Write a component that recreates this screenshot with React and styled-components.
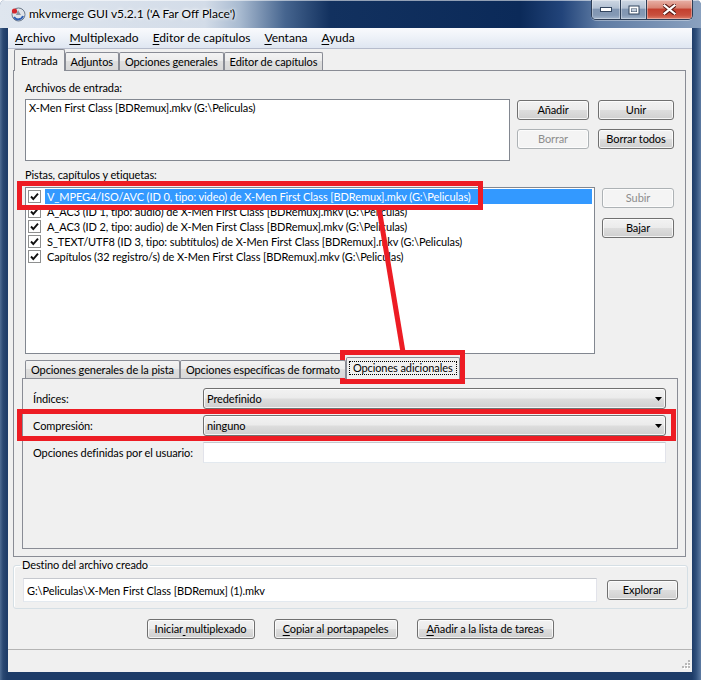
import React from "react";
import styled, { createGlobalStyle } from "styled-components";

const FONT = `Lato, "Noto Sans", "Liberation Sans", sans-serif`;
const PANE = "#f0f0f0";

const GlobalStyle = createGlobalStyle`
  *, *::before, *::after { box-sizing: border-box; }
  html, body { margin: 0; padding: 0; background: #ffffff; }
  body { font-family: ${FONT}; font-size: 11px; color: #000; }
`;

const Frame = styled.div`
  position: relative;
  width: 701px;
  height: 680px;
  display: flex;
  flex-direction: column;
  overflow: hidden;
  font-family: ${FONT};
  font-size: 11px;
  letter-spacing: -0.1px;
  border-radius: 5px 5px 0 0;
  background: linear-gradient(
    90deg,
    #4f6c93 0px,
    #2a4872 3px,
    #1e3c68 7px,
    #1e3c68 calc(100% - 9px),
    #2f4f7b calc(100% - 5px),
    #5e7ba2 100%
  );
`;

const TitleBar = styled.div`
  height: 28px;
  flex: none;
  display: flex;
  align-items: flex-start;
  padding-left: 10px;
  letter-spacing: 0;
  background: linear-gradient(
    90deg,
    #dfe6ef 0px,
    #d3dce8 205px,
    #a8bad0 240px,
    #46658f 285px,
    #12315f 330px,
    #0b2a59 520px,
    #22447a 562px,
    #5f7ca4 600px,
    #8aa1bf 701px
  );
  box-shadow: inset 0 1px 0 rgba(255, 255, 255, 0.55);
`;

const AppIcon = styled.svg`
  flex: none;
  margin-top: 6px;
`;

const Title = styled.div`
  margin-left: 3px;
  line-height: 28px;
  font-size: 12px;
  color: #000;
  white-space: nowrap;
  text-shadow: 0 0 5px #fff, 0 0 3px #fff;
`;

const Caption = styled.div`
  margin-left: auto;
  margin-right: 8px;
  height: 20px;
  display: flex;
  border: 1px solid #2c3d55;
  border-top: none;
  border-radius: 0 0 5px 5px;
  overflow: hidden;
  box-shadow: 0 1px 0 rgba(255, 255, 255, 0.35);
`;

const CapBtn = styled.div`
  width: ${(p) => p.$w}px;
  height: 100%;
  display: flex;
  align-items: center;
  justify-content: center;
  border-left: ${(p) => (p.$first ? "none" : "1px solid #2c3d55")};
  box-shadow: inset 0 0 0 1px rgba(255, 255, 255, 0.35);
  background: ${(p) =>
    p.$close
      ? "linear-gradient(#e8b0a6 0%, #d98676 40%, #c4402f 50%, #c9503e 80%, #de7d69 100%)"
      : "linear-gradient(#cdd7e3 0%, #b3c1d3 42%, #8196b2 50%, #8499b4 80%, #a4b6cc 100%)"};
`;

const Client = styled.div`
  margin: 0 9px 0 8px;
  height: 644px;
  flex: none;
  display: flex;
  flex-direction: column;
  background: #f0f0f0;
`;

const MenuBar = styled.div`
  height: 21px;
  flex: none;
  display: flex;
  align-items: center;
  border-bottom: 1px solid #b6bccc;
  background: linear-gradient(#f9fafd 0%, #eef2f8 45%, #dfe6f1 100%);
  font-size: 12px;
  letter-spacing: 0;
`;

const MenuItem = styled.div`
  padding: 0 7px;
  line-height: 20px;
  white-space: nowrap;
`;

const Key = styled.span`
  text-decoration: underline;
  text-underline-offset: 2px;
`;

const TabStrip = styled.div`
  height: 22px;
  flex: none;
  display: flex;
  align-items: flex-end;
  margin: ${(p) => p.$margin};
  padding-left: ${(p) => p.$pad}px;
  margin-bottom: -1px;
  position: relative;
  z-index: 1;
`;

const Tab = styled.div`
  height: ${(p) => (p.$active ? 22 : 18)}px;
  margin-bottom: ${(p) => (p.$active ? 0 : 1)}px;
  padding: 0 ${(p) => p.$px ?? (p.$active ? 6 : 5)}px ${(p) => (p.$active ? 1 : 0)}px;
  display: flex;
  align-items: center;
  white-space: nowrap;
  border: 1px solid #898c95;
  border-bottom: none;
  border-radius: 2px 2px 0 0;
  background: ${(p) =>
    p.$active
      ? PANE
      : "linear-gradient(#f3f3f3 0%, #ececec 45%, #dedede 50%, #d8d8d8 100%)"};
`;

const Focus = styled.span`
  display: inline-block;
  padding: 0 3px;
  line-height: 12px;
  border: 1px dotted #000;
`;

const Panel = styled.div`
  flex: none;
  display: flex;
  flex-direction: column;
  margin: 0 6px 0 5px;
  padding: 0 7px 7px 8px;
  border: 1px solid #898c95;
  background: ${PANE};
`;

const Label = styled.div`
  line-height: 14px;
  margin: ${(p) => p.$m};
  white-space: nowrap;
`;

const Row = styled.div`
  display: flex;
  gap: 7px;
  margin: ${(p) => p.$m};
  height: ${(p) => p.$h}px;
`;

const ListBox = styled.div`
  flex: 1;
  min-width: 0;
  background: #fff;
  border: 1px solid #828790;
  padding: 1px 2px;
  overflow: hidden;
`;

const FileLine = styled.div`
  line-height: 14px;
  padding-left: 1px;
  white-space: nowrap;
`;

const ButtonGrid = styled.div`
  display: grid;
  grid-template-columns: ${(p) => p.$cols};
  align-content: start;
  column-gap: 9px;
  row-gap: ${(p) => p.$rowGap}px;
  padding-top: 1px;
  margin-right: 4px;
`;

const Button = styled.button`
  width: ${(p) => p.$w}px;
  height: 20px;
  padding: 0;
  margin: 0;
  font-family: ${FONT};
  font-size: 11px;
  letter-spacing: -0.1px;
  line-height: 18px;
  text-align: center;
  white-space: nowrap;
  color: ${(p) => (p.disabled ? "#8d8d8d" : "#000")};
  border: 1px solid ${(p) => (p.disabled ? "#adb2b5" : "#707070")};
  border-radius: 3px;
  background: ${(p) =>
    p.disabled
      ? "#f4f4f4"
      : "linear-gradient(#f2f2f2 0%, #ebebeb 48%, #dddddd 52%, #cfcfcf 100%)"};
  box-shadow: inset 0 0 0 1px rgba(255, 255, 255, 0.75);
`;

const TrackRow = styled.div`
  display: flex;
  align-items: center;
  height: 15px;
`;

const Check = styled.div`
  width: 13px;
  height: 13px;
  flex: none;
  border: 1px solid #8e8f8f;
  background: #fff;
  display: flex;
  align-items: center;
  justify-content: center;
`;

const TrackText = styled.div`
  flex: 1;
  height: 15px;
  margin-left: 4px;
  padding-left: 2px;
  line-height: 15px;
  white-space: nowrap;
  color: ${(p) => (p.$sel ? "#fff" : "#000")};
  background: ${(p) => (p.$sel ? "#3399ff" : "transparent")};
`;

const InnerPanel = styled.div`
  height: 171px;
  flex: none;
  border: 1px solid #898c95;
  background: ${PANE};
  padding: 9px 11px 0 10px;
  display: grid;
  grid-template-columns: 170px 1fr;
  grid-auto-rows: 21px;
  row-gap: 6px;
  align-items: center;
`;

const Combo = styled.div`
  height: 21px;
  display: flex;
  align-items: center;
  justify-content: space-between;
  padding: 0 3px 0 3px;
  border: 1px solid #707070;
  border-radius: 3px;
  background: linear-gradient(#f2f2f2 0%, #ebebeb 48%, #dddddd 52%, #cfcfcf 100%);
  box-shadow: inset 0 0 0 1px rgba(255, 255, 255, 0.75);
`;

const TextBox = styled.div`
  height: ${(p) => p.$h}px;
  flex: ${(p) => (p.$grow ? 1 : "none")};
  display: flex;
  align-items: center;
  padding-left: 3px;
  background: #fff;
  border: 1px solid;
  border-color: #c5c8ce #e2e3ea #e3e9ef #e2e3ea;
  white-space: nowrap;
`;

const Group = styled.fieldset`
  margin: 1px 4px 0 5px;
  padding: 0 9px 6px 9px;
  border: 1px solid #d5dfe5;
  border-radius: 3px;
  box-shadow: inset 1px 1px 0 #fff;
  min-width: 0;
`;

const Legend = styled.legend`
  margin-left: -3px;
  padding: 0 2px;
  line-height: 14px;
`;

const DestRow = styled.div`
  display: flex;
  align-items: center;
  gap: 10px;
  margin-top: 6px;
`;

const ActionRow = styled.div`
  display: flex;
  justify-content: center;
  gap: 19px;
  margin-top: 10px;
`;

const StatusBar = styled.div`
  margin-top: auto;
  height: 23px;
  flex: none;
  border-top: 1px solid #b4b4b4;
  display: flex;
  align-items: flex-end;
  justify-content: flex-end;
  padding: 0 2px 2px 0;
`;

const Annotations = styled.svg`
  position: absolute;
  left: 0;
  top: 0;
  pointer-events: none;
`;

const CheckMark = () => (
  <svg width="11" height="11" viewBox="0 0 11 11">
    <path d="M2 5.5 L4.3 8 L9 2.6" fill="none" stroke="#111" strokeWidth="1.9" />
  </svg>
);

const Arrow = () => (
  <svg width="7" height="4" viewBox="0 0 7 4">
    <path d="M0 0 H7 L3.5 4 Z" fill="#000" />
  </svg>
);

const tracks = [
  "V_MPEG4/ISO/AVC (ID 0, tipo: video) de X-Men First Class [BDRemux].mkv (G:\\Peliculas)",
  "A_AC3 (ID 1, tipo: audio) de X-Men First Class [BDRemux].mkv (G:\\Peliculas)",
  "A_AC3 (ID 2, tipo: audio) de X-Men First Class [BDRemux].mkv (G:\\Peliculas)",
  "S_TEXT/UTF8 (ID 3, tipo: subtítulos) de X-Men First Class [BDRemux].mkv (G:\\Peliculas)",
  "Capítulos (32 registro/s) de X-Men First Class [BDRemux].mkv (G:\\Peliculas)",
];

export default function App() {
  return (
    <>
      <GlobalStyle />
      <Frame>
        <TitleBar>
          <AppIcon width="16" height="16" viewBox="0 0 16 16">
            <circle cx="8.5" cy="8.5" r="6.5" fill="#dfe3e8" stroke="#6d7b8c" strokeWidth="1" />
            <path d="M4 11 A5 5 0 0 0 13 10" fill="none" stroke="#2f5fb3" strokeWidth="2" />
            <path d="M8 4 L11 9 L6 9 Z" fill="#8a96a5" />
            <circle cx="4.5" cy="5" r="2.6" fill="#d4262c" />
          </AppIcon>
          <Title>mkvmerge GUI v5.2.1 ('A Far Off Place')</Title>
          <Caption>
            <CapBtn $w={28} $first>
              <svg width="12" height="5" viewBox="0 0 12 5">
                <rect x="0.5" y="0.5" width="11" height="4" fill="#fff" stroke="#33465f" />
              </svg>
            </CapBtn>
            <CapBtn $w={26}>
              <svg width="12" height="10" viewBox="0 0 12 10">
                <rect x="0.5" y="0.5" width="11" height="9" fill="#33465f" />
                <rect x="1.5" y="1.5" width="9" height="7" fill="#fff" />
                <rect x="3" y="3.5" width="6" height="3.5" fill="#33465f" />
                <rect x="3.5" y="4" width="5" height="2.5" fill="#c3cedb" />
              </svg>
            </CapBtn>
            <CapBtn $w={46} $close>
              <svg width="13" height="11" viewBox="0 0 13 11">
                <path
                  d="M1 1 L12 10 M12 1 L1 10"
                  stroke="#5b1c16"
                  strokeWidth="4.2"
                  strokeLinecap="square"
                />
                <path
                  d="M1.5 1.5 L11.5 9.5 M11.5 1.5 L1.5 9.5"
                  stroke="#fff"
                  strokeWidth="2.2"
                  strokeLinecap="square"
                />
              </svg>
            </CapBtn>
          </Caption>
        </TitleBar>

        <Client>
          <MenuBar>
            <MenuItem><Key>A</Key>rchivo</MenuItem>
            <MenuItem><Key>M</Key>ultiplexado</MenuItem>
            <MenuItem><Key>E</Key>ditor de capítulos</MenuItem>
            <MenuItem><Key>V</Key>entana</MenuItem>
            <MenuItem><Key>A</Key>yuda</MenuItem>
          </MenuBar>

          <TabStrip $margin="0 6px 0 5px" $pad={1}>
            <Tab $active>Entrada</Tab>
            <Tab>Adjuntos</Tab>
            <Tab>Opciones generales</Tab>
            <Tab>Editor de capítulos</Tab>
          </TabStrip>

          <Panel>
            <Label $m="10px 0 0 3px">Archivos de entrada:</Label>
            <Row $m="4px 0 0 3px" $h={62}>
              <ListBox>
                <FileLine>X-Men First Class [BDRemux].mkv (G:\Peliculas)</FileLine>
              </ListBox>
              <ButtonGrid $cols="72px 76px" $rowGap={9}>
                <Button $w={72}>Añadir</Button>
                <Button $w={76}>Unir</Button>
                <Button $w={72} disabled>Borrar</Button>
                <Button $w={76}>Borrar todos</Button>
              </ButtonGrid>
            </Row>

            <Label $m="7px 0 0 3px">Pistas, capítulos y etiquetas:</Label>
            <Row $m="5px 0 0 3px" $h={167}>
              <ListBox>
                {tracks.map((t, i) => (
                  <TrackRow key={i}>
                    <Check>
                      <CheckMark />
                    </Check>
                    <TrackText $sel={i === 0}>{t}</TrackText>
                  </TrackRow>
                ))}
              </ListBox>
              <ButtonGrid $cols="72px" $rowGap={10}>
                <Button $w={72} disabled>Subir</Button>
                <Button $w={72}>Bajar</Button>
              </ButtonGrid>
            </Row>

            <TabStrip $margin="3px 0 -1px 0" $pad={3}>
              <Tab>Opciones generales de la pista</Tab>
              <Tab>Opciones específicas de formato</Tab>
              <Tab $active $px={2}>
                <Focus>Opciones adicionales</Focus>
              </Tab>
            </TabStrip>
            <InnerPanel>
              <Label>Índices:</Label>
              <Combo>
                <span>Predefinido</span>
                <Arrow />
              </Combo>
              <Label>Compresión:</Label>
              <Combo>
                <span>ninguno</span>
                <Arrow />
              </Combo>
              <Label>Opciones definidas por el usuario:</Label>
              <TextBox $h={21} />
            </InnerPanel>
          </Panel>

          <Group>
            <Legend>Destino del archivo creado</Legend>
            <DestRow>
              <TextBox $h={24} $grow>
                G:\Peliculas\X-Men First Class [BDRemux] (1).mkv
              </TextBox>
              <Button $w={71}>Explorar</Button>
            </DestRow>
          </Group>

          <ActionRow>
            <Button $w={108}>
              Iniciar<Key>&nbsp;</Key>multiplexado
            </Button>
            <Button $w={124}>
              <Key>C</Key>opiar al portapapeles
            </Button>
            <Button $w={137}>
              <Key>A</Key>ñadir a la lista de tareas
            </Button>
          </ActionRow>

          <StatusBar>
            <svg width="10" height="10" viewBox="0 0 10 10">
              {[
                [8, 0], [8, 3], [5, 3], [8, 6], [5, 6], [2, 6],
              ].map(([x, y], i) => (
                <g key={i}>
                  <rect x={x + 1} y={y + 1} width="2" height="2" fill="#fff" />
                  <rect x={x} y={y} width="2" height="2" fill="#b8b8b8" />
                </g>
              ))}
            </svg>
          </StatusBar>
        </Client>

        <Annotations width="701" height="680" viewBox="0 0 701 680">
          <g fill="none" stroke="#ed1c24" strokeWidth="5">
            <rect x="19.5" y="183.5" width="461" height="24" />
            <rect x="342.5" y="352.5" width="120" height="29" />
            <rect x="19.5" y="411.5" width="654" height="27" />
            <line x1="379" y1="208" x2="403" y2="352" />
          </g>
        </Annotations>
      </Frame>
    </>
  );
}
